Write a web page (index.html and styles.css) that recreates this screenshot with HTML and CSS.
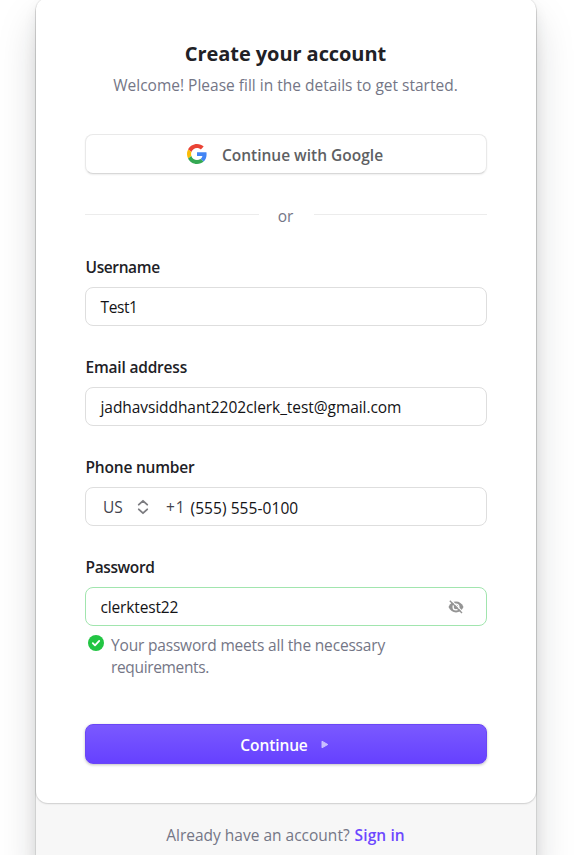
FILE: index.html
```
<!DOCTYPE html>
<html lang="en">
<head>
<meta charset="utf-8">
<title>Create your account</title>
<link rel="stylesheet" href="styles.css">
</head>
<body>
<main class="card-box">
  <section class="card">
    <header class="header">
      <h1 class="title">Create your account</h1>
      <p class="subtitle">Welcome! Please fill in the details to get started.</p>
    </header>
    <button class="social" type="button">
      <svg class="google" viewBox="0 0 48 48" aria-hidden="true">
        <path fill="#EA4335" d="M24 9.5c3.54 0 6.71 1.22 9.21 3.6l6.85-6.85C35.9 2.38 30.47 0 24 0 14.62 0 6.51 5.38 2.56 13.22l7.98 6.19C12.43 13.72 17.74 9.5 24 9.5z"/>
        <path fill="#4285F4" d="M46.98 24.55c0-1.57-.15-3.09-.38-4.55H24v9.02h12.94c-.58 2.96-2.26 5.48-4.78 7.18l7.73 6c4.51-4.18 7.09-10.36 7.09-17.65z"/>
        <path fill="#FBBC05" d="M10.53 28.59A14.5 14.5 0 0 1 9.77 24c0-1.6.27-3.14.76-4.59l-7.98-6.19A23.99 23.99 0 0 0 0 24c0 3.87.93 7.53 2.56 10.78l7.97-6.19z"/>
        <path fill="#34A853" d="M24 48c6.48 0 11.93-2.13 15.89-5.81l-7.73-6c-2.15 1.45-4.92 2.3-8.16 2.3-6.26 0-11.57-4.22-13.47-9.91l-7.98 6.19C6.51 42.62 14.62 48 24 48z"/>
      </svg>
      <span class="social-text">Continue with Google</span>
    </button>
    <div class="divider"><span class="or">or</span></div>
    <form class="form">
      <div class="field">
        <span class="label label-username">Username</span>
        <div class="input"><span class="value value-username">Test1</span></div>
      </div>
      <div class="field">
        <span class="label label-email">Email address</span>
        <div class="input"><span class="value value-email">jadhavsiddhant2202clerk_test@gmail.com</span></div>
      </div>
      <div class="field">
        <span class="label label-phone">Phone number</span>
        <div class="input phone">
          <span class="country">US</span>
          <svg class="chevrons" viewBox="0 0 12 16" aria-hidden="true"><path d="M1.8 5.7 6 1.8l4.2 3.9M1.8 10.3 6 14.2l4.2-3.9"/></svg>
          <span class="code">+1</span>
          <span class="value value-phone">(555) 555-0100</span>
        </div>
      </div>
      <div class="field">
        <span class="label label-password">Password</span>
        <div class="input valid">
          <span class="value value-password">clerktest22</span>
          <svg class="eye" viewBox="0 0 16 14" aria-hidden="true">
            <path class="eye-shape" d="M.5 7C2 3.5 4.8 1.6 8 1.6S14 3.5 15.5 7C14 10.5 11.2 12.4 8 12.4S2 10.5.5 7z"/>
            <circle class="eye-ring" cx="8" cy="7" r="2.9"/>
            <path class="eye-gap" d="M3.2.3 15 12.1"/>
            <path class="eye-slash" d="M1.8.8 14 13"/>
          </svg>
        </div>
        <div class="feedback">
          <svg class="check" viewBox="0 0 16 16" aria-hidden="true"><circle cx="8" cy="8" r="8"/><path d="m4.8 8.2 2.2 2.2 4.2-4.5"/></svg>
          <p class="feedback-text">Your password meets all the necessary<br><span class="feedback-end">requirements.</span></p>
        </div>
      </div>
      <button class="submit" type="button">
        <span class="submit-text">Continue</span>
        <svg class="arrow" viewBox="0 0 8 9" aria-hidden="true"><path d="M1 1.2v6.6L6.8 4.5z"/></svg>
      </button>
    </form>
  </section>
  <footer class="footer"><span class="question">Already have an account?</span><a class="signin">Sign in</a></footer>
</main>
</body>
</html>
```
FILE: styles.css
```
* { box-sizing: border-box; }
html { background: #fff; }
body {
  margin: 0;
  height: 855px;
  overflow: hidden;
  font-family: "Open Sans", "Noto Sans", sans-serif;
  font-size: 15.5px;
  line-height: 22px;
  color: #212126;
  white-space: nowrap;
}
h1, p { margin: 0; }
button { font: inherit; }
svg { display: block; flex: none; }
.card-box {
  width: 500px;
  height: 880px;
  margin: -2px 0 0 36px;
  border-radius: 15px;
  background: #f7f7f7;
  box-shadow: 0 0 0 1px rgba(0,0,0,.08), 0 19px 44px -6px rgba(25,28,33,.22), 0 6px 14px rgba(0,0,0,.08);
}
.card {
  height: 805px;
  padding: 42px 49px 0;
  border-radius: 12px;
  background: #fff;
  box-shadow: 0 0 0 1px rgba(0,0,0,.05), 0 1px 2px rgba(0,0,0,.12);
}
.header { padding-right: 1px; text-align: center; }
.title { font-size: 20px; line-height: 28px; font-weight: 700; letter-spacing: -.07px; }
.subtitle { margin-top: 6px; color: #747686; }
.social {
  display: flex;
  align-items: center;
  justify-content: center;
  width: 402px;
  height: 40px;
  margin-top: 38px;
  padding: 0 2px 0 0;
  border: 1px solid #e9e9e9;
  border-bottom-color: #d8d8d8;
  border-radius: 8px;
  background: #fff;
  color: #5e5f63;
  box-shadow: 0 1px 2px rgba(0,0,0,.07);
}
.google { width: 20px; height: 20px; margin-right: 15px; }
.social-text { font-weight: 600; padding-top: 1px; }
.divider { display: flex; align-items: center; height: 22px; margin-top: 30px; color: #747686; }
.divider::before, .divider::after { content: ""; flex: 1; height: 1px; background: #ececec; margin-bottom: 2px; }
.or { width: 55px; padding-right: 1px; text-align: center; padding-top: 2px; }
.form { margin-top: 30px; }
.field { margin-bottom: 30px; }
.label { display: block; width: max-content; height: 22px; padding-left: .5px; font-weight: 600; letter-spacing: -.2px; }
.label-username, .label-password { letter-spacing: -.38px; }
.input {
  display: flex;
  align-items: center;
  width: 402px;
  height: 39px;
  margin-top: 9px;
  padding: 1px 15px 0 14px;
  border: 1px solid #dedede;
  border-radius: 8px;
  background: #fff;
  color: #131316;
}
.value-username { padding-left: .5px; letter-spacing: -.4px; }
.value-email { padding-left: .5px; letter-spacing: -.07px; }
.value-password { padding-left: .5px; letter-spacing: -.15px; }
.phone { padding-left: 17px; }
.country { color: #42434d; width: 34px; }
.chevrons { width: 12px; height: 16px; margin-right: 17px; fill: none; stroke: #7c7c80; stroke-width: 1.8; stroke-linecap: round; stroke-linejoin: round; }
.code { color: #42434d; width: 24.5px; letter-spacing: .8px; }
.value-phone { padding-top: 1px; letter-spacing: .07px; }
.valid { border-color: #a1e5ae; }
.eye { width: 16px; height: 14px; margin: 0 7px 0 auto; }
.eye-shape { fill: #949494; }
.eye-ring { fill: none; stroke: #fff; stroke-width: 1.3; }
.eye-gap { stroke: #fff; stroke-width: 1.2; }
.eye-slash { stroke: #949494; stroke-width: 1.4; }
.feedback { display: flex; margin: 8px 0 0 3px; color: #747686; }
.feedback-text { letter-spacing: -.18px; }
.feedback-end { letter-spacing: -.35px; }
.check { width: 16px; height: 16px; margin: 1px 7px 0 0; }
.check circle { fill: #22c543; }
.check path { fill: none; stroke: #fff; stroke-width: 1.8; stroke-linecap: round; stroke-linejoin: round; }
.submit {
  display: flex;
  align-items: center;
  justify-content: center;
  width: 402px;
  height: 40px;
  margin-top: 46px;
  padding: 0 3px 0 0;
  border: 1px solid #6a46f5;
  border-radius: 8px;
  background: linear-gradient(#7a59ff, #6641ff);
  color: #fff;
  box-shadow: 0 1px 3px rgba(0,0,0,.25);
}
.submit-text { font-weight: 600; padding-top: 2px; letter-spacing: -.1px; }
.arrow { width: 8px; height: 9px; margin-left: 13px; fill: #cabfff; stroke: #cabfff; stroke-linejoin: round; }
.footer { display: flex; justify-content: center; padding: 21px 1px 0 0; color: #747686; }
.signin { margin-left: 5px; color: #6c47ff; font-weight: 600; letter-spacing: .1px; }
```
